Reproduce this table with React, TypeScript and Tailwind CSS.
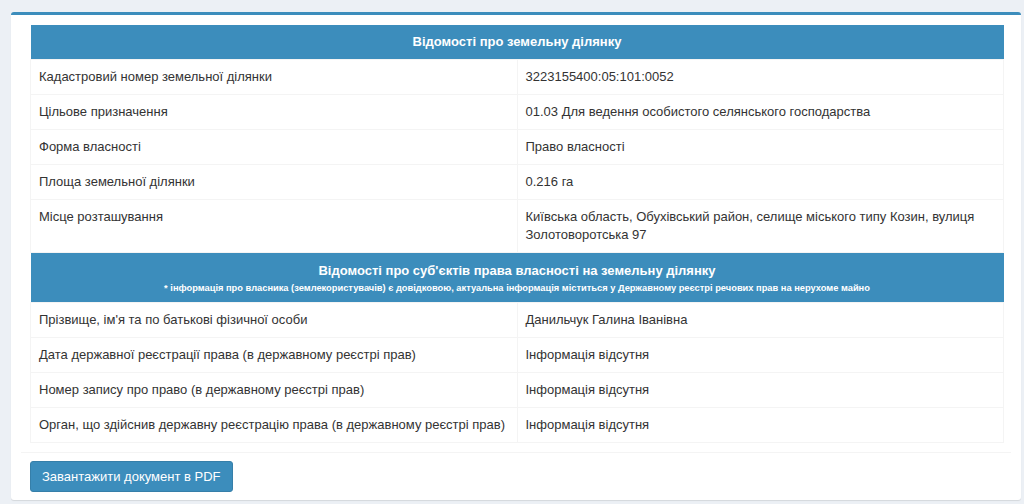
import React from "react";

const landRows: [string, React.ReactNode][] = [
  ["Кадастровий номер земельної ділянки", "3223155400:05:101:0052"],
  ["Цільове призначення", "01.03 Для ведення особистого селянського господарства"],
  ["Форма власності", "Право власності"],
  ["Площа земельної ділянки", "0.216 га"],
  [
    "Місце розташування",
    "Київська область, Обухівський район, селище міського типу Козин, вулиця Золотоворотська 97",
  ],
];

const ownerRows: [string, string][] = [
  ["Прізвище, ім'я та по батькові фізичної особи", "Данильчук Галина Іванівна"],
  ["Дата державної реєстрації права (в державному реєстрі прав)", "Інформація відсутня"],
  ["Номер запису про право (в державному реєстрі прав)", "Інформація відсутня"],
  ["Орган, що здійснив державну реєстрацію права (в державному реєстрі прав)", "Інформація відсутня"],
];

const Row = ({ label, value }: { label: string; value: React.ReactNode }) => (
  <tr>
    <td className="w-1/2 border border-[#f4f4f4] px-2 py-2 align-top">{label}</td>
    <td className="w-1/2 border border-[#f4f4f4] px-2 py-2 align-top">{value}</td>
  </tr>
);

export default function App() {
  return (
    <div
      className="min-h-screen bg-[#ecf0f5] pt-[12px] pl-[11px] pr-[3px] text-[13px] leading-[18px] text-[#333]"
      style={{ fontFamily: '"Liberation Sans", Arial, sans-serif' }}
    >
      <div className="w-[1010px] rounded-[3px] border-t-[3px] border-[#3c8dbc] bg-white shadow-[0_1px_1px_rgba(0,0,0,0.1)]">
        <div className="pl-[19px] pr-[17px] pt-[10px] pb-[9px]">
          <table className="w-full border-collapse">
            <tbody>
              <tr>
                <th
                  colSpan={2}
                  className="bg-[#3c8dbc] px-2 py-2 text-center text-[13px] font-bold text-white"
                >
                  Відомості про земельну ділянку
                </th>
              </tr>
              {landRows.map(([l, v]) => (
                <Row key={l} label={l} value={v} />
              ))}
              <tr>
                <th colSpan={2} className="bg-[#3c8dbc] px-2 pt-[9px] pb-[8px] text-center font-bold text-white">
                  <div className="text-[13px] leading-[18px]">
                    Відомості про суб'єктів права власності на земельну ділянку
                  </div>
                  <div className="mt-[2px] text-[9.3px] leading-[12px]">
                    * інформація про власника (землекористувачів) є довідковою, актуальна інформація міститься у Державному реєстрі речових прав на нерухоме майно
                  </div>
                </th>
              </tr>
              {ownerRows.map(([l, v]) => (
                <Row key={l} label={l} value={v} />
              ))}
            </tbody>
          </table>
        </div>
        <div className="mx-[10px] border-t border-[#f4f4f4] px-[9px] pt-[8px] pb-[8px]">
          <button className="rounded-[3px] border border-[#367fa9] bg-[#3c8dbc] px-[11px] py-[6px] text-[13px] leading-[17px] text-white">
            Завантажити документ в PDF
          </button>
        </div>
      </div>
    </div>
  );
}
